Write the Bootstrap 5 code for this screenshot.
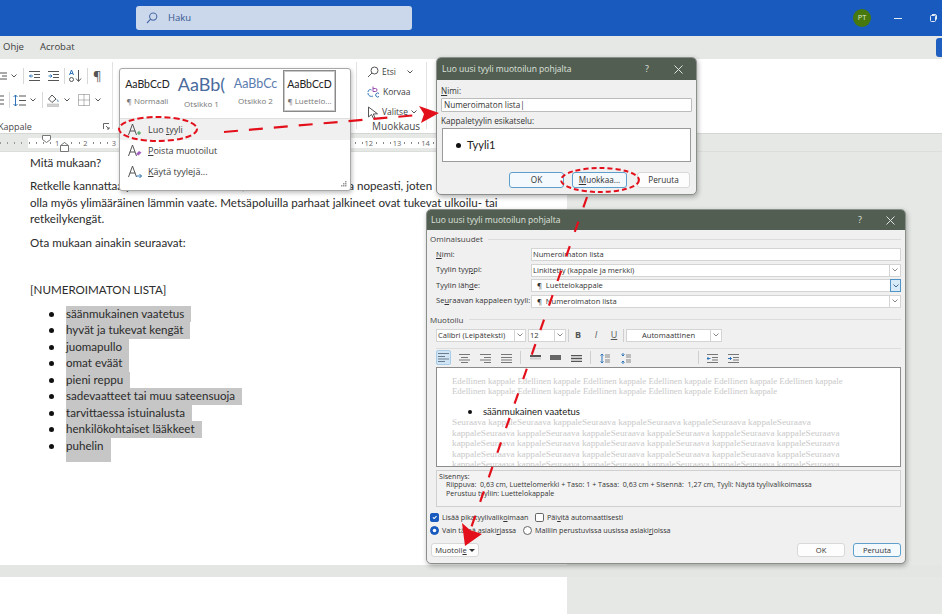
<!DOCTYPE html>
<html lang="fi">

<head>
    <meta charset="UTF-8">
    <meta name="viewport" content="width=device-width, initial-scale=1.0">
    <title>Luo uusi tyyli</title>
    <link href="https://cdn.jsdelivr.net/npm/bootstrap@5.3.0/dist/css/bootstrap.min.css" rel="stylesheet">
    <style>
        html, body { height: 100%; overflow: hidden; }
        body { background: #e6e8e6; font-family: "Open Sans", sans-serif; font-size: 9px; color: #333; }

        .app { width: 942px; height: 614px; overflow: hidden; }
        .gl-2 { margin-left: 2px; }
        .gl-3 { margin-left: 3px; }
        .gl-5 { margin-left: 5px; }
        .gl-6 { margin-left: 6px; }
        .no-shrink { flex: none; }

        /* title bar */
        .titlebar { height: 36px; background: #185abd; padding-left: 136px; padding-right: 5px; }
        .searchbox { width: 276px; height: 24px; background: #cbd8ec; border-radius: 3px; color: #34558f; font-size: 9.5px; padding-left: 10px; gap: 10px; }
        .avatar { width: 18px; height: 18px; border-radius: 50%; background: #47780e; color: #dfe8cf; font-size: 7.5px; margin-right: 23px; }
        .win-min { width: 8px; height: 1px; background: #e3ebf6; margin-right: 28px; }

        /* tabs */
        .tabstrip { height: 23px; background: #e6e8e6; font-size: 9.5px; color: #3c3c3c; padding-left: 3px; gap: 16px; }
        .sharebtn { width: 6px; height: 19px; background: #1f5fbf; border-radius: 3px 0 0 3px; }

        /* ribbon */
        .ribbon { height: 75px; background: #fff; border-bottom: 1px solid #d5d7d5; }
        .rib-left { width: 113px; border-right: 1px solid #e2e2e2; margin: 3px 0 4px; padding-top: 2px; }
        .rib-row { height: 24px; flex: none; }
        .rib-sep { width: 1px; height: 16px; background: #d8d8d8; flex: none; }
        .rib-pil { font-size: 13px; line-height: 1; color: #555; }
        .rib-name { font-size: 9px; color: #4a4a4a; line-height: 11px; }
        .rib-left .rib-name { margin-top: 9px; }
        .kap-name { margin-left: -2px; }
        .launcher { margin-right: 2px; }
        .rib-gallery { width: 243px; }
        .rib-edit { width: 71px; border-left: 1px solid #e2e2e2; border-right: 1px solid #e2e2e2; margin: 3px 0 4px; padding-left: 10px; font-size: 8.5px; color: #3c3c3c; }
        .edit-item { height: 20px; flex: none; gap: 3px; white-space: nowrap; }
        .edit-name { margin-top: -1px; margin-left: 5px; font-size: 10px; }

        /* ruler */
        .rulerbar { height: 18px; padding-top: 4px; background-color: #e6e8e6; border-bottom: 1px solid #dcdedc; padding-left: 28px; background-image: repeating-linear-gradient(90deg, #999 0 1px, transparent 1px 7.08px); background-size: 28px 2px; background-position: 0 8px; background-repeat: no-repeat; }
        .rulerwhite { width: 540px; height: 10px; background-color: #fff; padding-left: 15px; font-size: 7.5px; color: #666; line-height: 10px; background-image: repeating-linear-gradient(90deg, #888 0 1px, transparent 1px 7.08px); background-size: 100% 2px; background-position: 1px 4px; background-repeat: no-repeat; }
        .rulercell { width: 28.33px; flex: none; text-align: center; }
        .rulercell span { background: #fff; padding: 0 1px; }
        .rulermarks { left: 40px; top: 135px; z-index: 1; }

        /* document */
        .docarea { height: 413px; }
        .docpage { width: 567px; background: #fff; font-family: Lato, sans-serif; font-size: 11.6px; line-height: 16.4px; color: #2b2b2b; padding: 3px 0 0 30px; }
        .docpage p { margin: 0 0 7px; }
        .docpage .p-blank { margin-bottom: 0; }
        .docpage .p-head { margin-top: 8px; }
        .doclist { margin: 0; padding: 0; list-style: none; line-height: 16.5px; }
        .doclist li { position: relative; margin-left: 36px; }
        .doclist li::before { content: ""; position: absolute; left: -17.5px; top: 6px; width: 5px; height: 5px; border-radius: 50%; background: #111; }
        .sel { display: inline-block; background: #c6c6c6; padding-right: 7px; height: 16.5px; vertical-align: top; }
        .sel-last { height: 24px; }
        .docgap { height: 12px; background: #e4e6e4; }
        .docpage2 { width: 567px; height: 37px; background: #fff; }

        /* style gallery menu */
        .stylemenu { left: 119px; top: 68px; width: 232px; height: 123px; background: #fff; border: 1px solid #a8a8a8; border-radius: 3px; box-shadow: 1px 2px 4px rgba(0,0,0,.25); z-index: 5; }
        .gal-row { height: 50px; padding: 1px 0 0 3px; gap: 5px; border-bottom: 1px solid #dfdfdf; }
        .gal-cell { width: 49px; height: 42px; overflow: hidden; text-align: center; white-space: nowrap; flex: none; font-family: Lato, sans-serif; font-size: 10.5px; color: #222; line-height: 14px; padding-top: 7px; }
        .gal-cell small { display: block; font-family: "Open Sans", sans-serif; font-size: 8px; color: #777; margin-top: 4px; line-height: 12px; }
        .gal-big { font-size: 18px; color: #4a6a9c; line-height: 14px; }
        .gal-mid { font-size: 12.5px; color: #5a7cb0; }
        .gal-on { border: 1px solid #8a8a8a; outline: 1px solid #c8c8c8; outline-offset: -2px; width: 53px; padding-top: 6px; margin-left: -2px; }
        .menu-item { height: 21px; gap: 6px; padding-left: 8px; font-size: 9px; color: #3c3c3c; }
        .menu-on { background: #f0f0f0; }
        .menu-grip { right: 3px; bottom: 3px; }

        /* dialogs */
        .dlg { background: #f0f0f0; border: 1px solid #8a8f8a; border-radius: 5px; box-shadow: 1px 2px 5px rgba(0,0,0,.3); overflow: hidden; z-index: 6; font-size: 8.2px; color: #333; }
        .dlg-head { height: 22px; background: #535e52; color: #dfe3df; padding: 0 13px 0 5px; font-size: 8.5px; }
        .dlg-q { margin-right: 25px; font-size: 9px; }
        .dlg-one { left: 436px; top: 57px; width: 261px; height: 138px; }
        .dlg-two { left: 426px; top: 209px; width: 480px; height: 355px; font-size: 7.6px; }
        .dlg-two .dlg-head { height: 20px; padding: 0 10px 0 4px; }
        .dlg-two .dlg-q { margin-right: 24px; }

        .field { height: 14px; padding: 0 2px; border: 1px solid #bcbcbc; border-radius: 1px; background: #fff; color: #333; line-height: 12px; }
        .dlg-lab1 { margin-top: 5px; margin-bottom: 2px; line-height: 11px; }
        .dlg-lab2 { margin-top: 2.5px; line-height: 11px; }
        .dlg-btn { height: 16px; padding: 0; font-size: 8.2px; line-height: 14px; color: #333; background: #fdfdfd; border: 1px solid #d8d8d8; border-radius: 3px; }
        .dlg-btn:hover { color: #333; background: #fdfdfd; border-color: #d8d8d8; }
        .dlg-btn-on, .dlg-btn-on:hover { background: #f3f9fd; border-color: #5f9fcb; }
        .btn-w55 { width: 55px; }
        .btn-w53 { width: 53px; margin-left: 2px; }
        .one-preview { height: 34px; margin: 2.5px 1px 0; background: #fff; border: 1px solid #9a9a9a; gap: 6px; padding-left: 13px; }
        .one-dot { width: 5px; height: 5px; border-radius: 50%; background: #111; }
        .one-style { font-family: Lato, sans-serif; font-size: 11px; color: #222; }
        .one-btns { margin-top: 10px; margin-left: 68px; gap: 8px; }

        .two-body { padding: 3px 4px 0 3px; }
        .legendrow { gap: 5px; line-height: 12px; color: #444; font-size: 8px; }
        .legendrow i { flex: 1; height: 1px; background: #dcdcdc; }
        .prop-legend { margin-bottom: 3px; }
        .fmt-legend { margin-top: 6px; margin-bottom: 3px; }
        .prop-row { height: 13px; margin-bottom: 2.5px; }
        .prop-label { width: 101px; padding-left: 6px; flex: none; white-space: nowrap; }
        .combo { height: 13px; background: #fff; border: 1px solid #d4d4d4; flex: 1; padding-left: 1px; line-height: 11px; position: relative; white-space: nowrap; }
        .combo-arrow { position: absolute; right: 0; top: 0; bottom: 0; width: 11px; border-left: 1px solid #d4d4d4; display: flex; align-items: center; justify-content: center; }
        .combo-on { background: #d8eaf7; border: 1px solid #4f94c4; right: -1px; top: -1px; bottom: -1px; }
        .fmt-row { height: 13px; padding-left: 6px; }
        .font-combo { flex: none; width: 90px; }
        .size-combo { flex: none; width: 38px; margin-left: 2px; }
        .color-combo { flex: none; width: 96px; padding-right: 12px; }
        .tool-glyph { width: 18px; text-align: center; flex: none; font-size: 9px; color: #555; }
        .tool-div { width: 1px; height: 13px; background: #cfcfcf; flex: none; }
        .tool-on { width: 15px; height: 15px; background: #cfe4f5; border: 1px solid #a9cde8; border-radius: 2px; flex: none; }
        .tools-rule { height: 1px; background: #dcdcdc; margin: 6px 0 0 6px; }
        .align-row { height: 18px; padding-left: 6px; }
        .indent-div { margin-left: 63px; }

        .sample { height: 100px; margin-left: 6px; background: #fff; border: 1px solid #8c8c8c; font-family: "Liberation Serif", serif; font-size: 8.8px; line-height: 10.5px; color: #c9c9c9; overflow: hidden; padding: 8px 0 0 15px; white-space: nowrap; }
        .sample-list { position: relative; margin: 9.5px 0 -1px 31px; font-family: Lato, sans-serif; font-size: 9.5px; line-height: 12px; color: #222; }
        .sample-list::before { content: ""; position: absolute; left: -15px; top: 4px; width: 4px; height: 4px; border-radius: 50%; background: #111; }
        .sample-next { font-size: 9.25px; }
        .descbox { height: 37px; margin: 3px 0 0 6px; background: #f3f3f3; border: 1px solid #d0d0d0; padding: 1px 2px; font-size: 7.1px; line-height: 8.7px; color: #333; }
        .descbox div + div { padding-left: 7px; }

        .opt-line { height: 12.5px; font-size: 7.2px; }
        .opts-first { margin-top: 5px; }
        .opt { gap: 3px; white-space: nowrap; }
        .opt-w1 { width: 105px; }
        .opt-w2 { width: 93px; }
        .opt .form-check-input { width: 9px; height: 9px; margin: 0; flex: none; float: none; border-color: #666; }
        .opt .form-check-input:checked { background-color: #185abd; border-color: #185abd; }
        .two-btns { margin-top: 6px; gap: 8px; }
        .two-btns .btn { height: 14px; line-height: 12px; font-size: 7.6px; }
        .muotoile-btn { width: 48px; margin-left: 1px; }
        .ok-two { width: 48px; }
        .caret-mini { display: inline-block; width: 0; height: 0; border: 3px solid transparent; border-top-color: #333; border-bottom: 0; vertical-align: middle; }

        .marks { left: 0; top: 0; z-index: 9; pointer-events: none; }
    </style>
</head>

<body>
    <div class="app position-relative">

        <!-- title bar -->
        <div class="titlebar d-flex align-items-center">
            <div class="searchbox d-flex align-items-center">
                <svg width="12" height="12" viewBox="0 0 12 12" fill="none" stroke="#4a6aa5" stroke-width="1.1"><circle cx="7.2" cy="4.6" r="3.6"/><path d="M4.6 7.2 1 11"/></svg>
                <span>Haku</span>
            </div>
            <div class="ms-auto d-flex align-items-center">
                <div class="avatar d-flex align-items-center justify-content-center">PT</div>
                <div class="win-min"></div>
                <svg width="7" height="8" viewBox="0 0 7 8" fill="none" stroke="#e3ebf6"><rect x=".5" y="1.500" width="5" height="6" rx="1"/><path d="M2 .5h3a1.500 1.500 0 0 1 1.500 1.500v3.500"/></svg>
            </div>
        </div>

        <!-- tabs -->
        <div class="tabstrip d-flex align-items-center">
            <span>Ohje</span>
            <span>Acrobat</span>
            <div class="sharebtn ms-auto"></div>
        </div>

        <!-- ribbon -->
        <div class="ribbon d-flex">
            <div class="rib-left d-flex flex-column">
                <div class="rib-row d-flex align-items-center">
                    <svg class="no-shrink" width="7" height="10" viewBox="0 0 7 10" stroke="#555"><path d="M0 2h7M2 5h5M0 8h7"/></svg>
                    <svg class="ms-1" width="6" height="4" viewBox="0 0 6 4" fill="none" stroke="#555"><path d="M.5.5 3 3 5.500.5"/></svg>
                    <div class="rib-sep gl-6"></div>
                    <svg class="gl-5" width="11" height="10" viewBox="0 0 11 10" fill="none"><path d="M0 .5h11M5 3.500h6M5 6.500h6M0 9.500h11" stroke="#555"/><path d="M4 5H.5M2 3.500.5 5 2 6.500" stroke="#2d72b8"/></svg>
                    <svg class="ms-2" width="11" height="10" viewBox="0 0 11 10" fill="none"><path d="M0 .5h11M5 3.500h6M5 6.500h6M0 9.500h11" stroke="#555"/><path d="M.5 5H4M2.500 3.500 4 5 2.500 6.500" stroke="#2d72b8"/></svg>
                    <div class="rib-sep gl-5"></div>
                    <svg class="ms-1" width="13" height="14" viewBox="0 0 13 14" fill="none"><path d="M.5 6 2.500 1l2 5M1.200 4.500h2.600" stroke="#2d72b8"/><rect x=".5" y="8.500" width="4" height="4" rx="2" stroke="#555"/><path d="M9.500 1v11M7 9.500l2.500 3 2.500-3" stroke="#555"/></svg>
                    <div class="rib-sep gl-5"></div>
                    <span class="gl-5 rib-pil">¶</span>
                </div>
                <div class="rib-row d-flex align-items-center">
                    <svg class="no-shrink" width="4" height="10" viewBox="0 0 4 10" stroke="#555"><path d="M0 1h4M0 5h4M0 9h4"/></svg>
                    <div class="rib-sep gl-5"></div>
                    <svg class="gl-3" width="13" height="13" viewBox="0 0 13 13" fill="none"><path d="M6 2h7M6 6.500h7M6 11h7" stroke="#555"/><path d="M2.500 1v11M.5 3l2-2 2 2M.5 10l2 2 2-2" stroke="#2d72b8"/></svg>
                    <svg class="ms-1" width="6" height="4" viewBox="0 0 6 4" fill="none" stroke="#555"><path d="M.5.5 3 3 5.500.5"/></svg>
                    <div class="rib-sep gl-6"></div>
                    <svg class="ms-1" width="12" height="14" viewBox="0 0 12 14" fill="none"><path d="M5 2 1.500 6l3.500 3.500L9 6z" stroke="#555"/><path d="M10 6.500c.8 1 1.200 1.700 1 2.300" stroke="#2d72b8"/><rect x="0" y="11" width="12" height="2.500" fill="#d4d4d4" stroke="#aaa" stroke-width=".5"/></svg>
                    <svg class="gl-5" width="6" height="4" viewBox="0 0 6 4" fill="none" stroke="#555"><path d="M.5.5 3 3 5.500.5"/></svg>
                    <svg class="ms-2" width="12" height="12" viewBox="0 0 12 12" fill="none" stroke="#777" stroke-dasharray="1 1"><path d="M.5.5h11v11H.5zM6 .5v11M.5 6h11"/></svg>
                    <svg class="gl-5" width="6" height="4" viewBox="0 0 6 4" fill="none" stroke="#555"><path d="M.5.5 3 3 5.500.5"/></svg>
                </div>
                <div class="rib-name d-flex align-items-center">
                    <span class="kap-name">Kappale</span>
                    <svg class="ms-auto launcher" width="7" height="7" viewBox="0 0 7 7" fill="none" stroke="#666"><path d="M.5 6V.5H6M3 3l3 3M6 4v2H4"/></svg>
                </div>
            </div>
            <div class="rib-gallery"></div>
            <div class="rib-edit d-flex flex-column">
                <div class="edit-item d-flex align-items-center">
                    <svg width="12" height="12" viewBox="0 0 12 12" fill="none" stroke="#555"><circle cx="7.500" cy="4.500" r="3.500"/><path d="M5 7 1 11"/></svg>
                    <span>Etsi</span>
                    <svg class="ms-2" width="6" height="4" viewBox="0 0 6 4" fill="none" stroke="#555"><path d="M.5.5 3 3 5.500.5"/></svg>
                </div>
                <div class="edit-item d-flex align-items-center">
                    <svg width="13" height="12" viewBox="0 0 13 12" fill="none"><path d="M6 .5v5h2.500a1.500 1.500 0 0 0 0-3H6" stroke="#9a4fb0"/><path d="M1 6c0-2 2-3 3.500-2" stroke="#2d72b8"/><path d="M1 7c0 3 3 4 5 3M12 7.500a2 2 0 1 0 0 3" stroke="#2d72b8"/></svg>
                    <span>Korvaa</span>
                </div>
                <div class="edit-item d-flex align-items-center">
                    <svg width="12" height="13" viewBox="0 0 12 13" fill="none" stroke="#555"><path d="M1.500 1v10l3-2.500L6.500 12.500 8 11.800 6.300 8l4.200-.2z"/></svg>
                    <span>Valitse</span>
                    <svg width="6" height="4" viewBox="0 0 6 4" fill="none" stroke="#555"><path d="M.5.5 3 3 5.500.5"/></svg>
                </div>
                <div class="rib-name edit-name">Muokkaus</div>
            </div>
        </div>

        <!-- ruler -->
        <div class="rulerbar">
            <div class="rulerwhite d-flex">
                <div class="rulercell"><span>1</span></div><div class="rulercell"><span>2</span></div><div class="rulercell"><span>3</span></div><div class="rulercell"><span>4</span></div><div class="rulercell"><span>5</span></div><div class="rulercell"><span>6</span></div><div class="rulercell"><span>7</span></div><div class="rulercell"><span>8</span></div><div class="rulercell"><span>9</span></div><div class="rulercell"><span>10</span></div><div class="rulercell"><span>11</span></div><div class="rulercell"><span>12</span></div><div class="rulercell"><span>13</span></div><div class="rulercell"><span>14</span></div>
            </div>
        </div>
        <svg class="rulermarks position-absolute" width="30" height="18" viewBox="0 0 30 18" fill="#fff" stroke="#777"><path d="M2.500.5h8v4l-4 3-4-3z"/><path d="M24.500 7.500l-4 3v6h8v-6z"/><path d="M20.500 10.500h8"/></svg>

        <!-- document -->
        <div class="docarea d-flex">
            <div class="docpage">
                <p>Mitä mukaan?</p>
                <p>Retkelle kannattaa pukeutua sään mukaan, koska sää voi vaihtua nopeasti, joten<br>olla myös ylimääräinen lämmin vaate. Metsäpoluilla parhaat jalkineet ovat tukevat ulkoilu- tai<br>retkeilykengät.</p>
                <p>Ota mukaan ainakin seuraavat:</p>
                <p class="p-blank">&nbsp;</p>
                <p class="p-head">[NUMEROIMATON LISTA]</p>
                <ul class="doclist">
                    <li><span class="sel">säänmukainen vaatetus</span></li>
                    <li><span class="sel">hyvät ja tukevat kengät</span></li>
                    <li><span class="sel">juomapullo</span></li>
                    <li><span class="sel">omat eväät</span></li>
                    <li><span class="sel">pieni reppu</span></li>
                    <li><span class="sel">sadevaatteet tai muu sateensuoja</span></li>
                    <li><span class="sel">tarvittaessa istuinalusta</span></li>
                    <li><span class="sel">henkilökohtaiset lääkkeet</span></li>
                    <li><span class="sel sel-last">puhelin</span></li>
                </ul>
            </div>
        </div>
        <div class="docgap"></div>
        <div class="docpage2"></div>

        <!-- style gallery -->
        <div class="stylemenu position-absolute">
            <div class="gal-row d-flex">
                <div class="gal-cell">AaBbCcD<small>¶ Normaali</small></div>
                <div class="gal-cell"><span class="gal-big">AaBb(</span><small>Otsikko 1</small></div>
                <div class="gal-cell"><span class="gal-mid">AaBbCc</span><small>Otsikko 2</small></div>
                <div class="gal-cell gal-on">AaBbCcD<small>¶ Luettelo...</small></div>
            </div>
            <div class="menu-item menu-on d-flex align-items-center">
                <svg width="14" height="13" viewBox="0 0 14 13" fill="none"><path d="M.5 12 4.500 1l4 11M1.800 8h5.400" stroke="#555"/><path d="M11 8v4M9 10h4" stroke="#3a9a50"/></svg>
                <span>Luo <u>t</u>yyli</span>
            </div>
            <div class="menu-item d-flex align-items-center">
                <svg width="14" height="13" viewBox="0 0 14 13" fill="none"><path d="M.5 12 4.500 1l4 11M1.800 8h5.400" stroke="#555"/><path d="m8 10 3-3 2.500 1.500-3 3z" fill="#a45fc0"/></svg>
                <span><u>P</u>oista muotoilut</span>
            </div>
            <div class="menu-item d-flex align-items-center">
                <svg width="14" height="13" viewBox="0 0 14 13" fill="none"><path d="M.5 12 4.500 1l4 11M1.800 8h5.400" stroke="#555"/><path d="M8.500 11h5M11.500 9l2 2-2 2" stroke="#2d72b8"/></svg>
                <span><u>K</u>äytä tyylejä...</span>
            </div>
            <svg class="menu-grip position-absolute" width="6" height="6" viewBox="0 0 6 6" fill="#999"><path d="M4 0h1.500v1.500H4zM2 2h1.500v1.500H2zM4 2h1.500v1.500H4zM0 4h1.500v1.500H0zM2 4h1.500v1.500H2zM4 4h1.500v1.500H4z"/></svg>
        </div>

        <!-- first dialog -->
        <div class="dlg dlg-one position-absolute">
            <div class="dlg-head d-flex align-items-center">
                <span class="me-auto">Luo uusi tyyli muotoilun pohjalta</span>
                <span class="dlg-q">?</span>
                <svg width="9" height="9" viewBox="0 0 9 9" stroke="#dfe3df"><path d="m.5.500 8 8M8.500.5l-8 8"/></svg>
            </div>
            <div class="px-1">
                <div class="dlg-lab1"><u>N</u>imi:</div>
                <div class="field">Numeroimaton lista|</div>
                <div class="dlg-lab2">Kappaletyylin esikatselu:</div>
                <div class="one-preview d-flex align-items-center">
                    <span class="one-dot"></span><span class="one-style">Tyyli1</span>
                </div>
                <div class="d-flex one-btns">
                    <button type="button" class="btn dlg-btn dlg-btn-on btn-w55">OK</button>
                    <button type="button" class="btn dlg-btn dlg-btn-on btn-w55"><u>M</u>uokkaa...</button>
                    <button type="button" class="btn dlg-btn btn-w53">Peruuta</button>
                </div>
            </div>
        </div>

        <!-- second dialog -->
        <div class="dlg dlg-two position-absolute">
            <div class="dlg-head d-flex align-items-center">
                <span class="me-auto">Luo uusi tyyli muotoilun pohjalta</span>
                <span class="dlg-q">?</span>
                <svg width="9" height="9" viewBox="0 0 9 9" stroke="#dfe3df"><path d="m.5.500 8 8M8.500.5l-8 8"/></svg>
            </div>
            <div class="two-body">
                <div class="legendrow d-flex align-items-center prop-legend"><span>Ominaisuudet</span><i></i></div>
                <div class="prop-row d-flex align-items-center">
                    <span class="prop-label"><u>N</u>imi:</span>
                    <div class="combo">Numeroimaton lista</div>
                </div>
                <div class="prop-row d-flex align-items-center">
                    <span class="prop-label">Tyylin tyy<u>p</u>pi:</span>
                    <div class="combo">Linkitetty (kappale ja merkki)
                        <span class="combo-arrow"><svg width="6" height="4" viewBox="0 0 6 4" fill="none" stroke="#888"><path d="M.5.5 3 3 5.500.5"/></svg></span>
                    </div>
                </div>
                <div class="prop-row d-flex align-items-center">
                    <span class="prop-label">Tyylin läh<u>d</u>e:</span>
                    <div class="combo">&nbsp;&nbsp;¶&nbsp; Luettelokappale
                        <span class="combo-arrow combo-on"><svg width="6" height="4" viewBox="0 0 6 4" fill="none" stroke="#3f6f99"><path d="M.5.5 3 3 5.500.5"/></svg></span>
                    </div>
                </div>
                <div class="prop-row d-flex align-items-center">
                    <span class="prop-label">Se<u>u</u>raavan kappaleen tyyli:</span>
                    <div class="combo">&nbsp;&nbsp;¶&nbsp; Numeroimaton lista
                        <span class="combo-arrow"><svg width="6" height="4" viewBox="0 0 6 4" fill="none" stroke="#888"><path d="M.5.5 3 3 5.500.5"/></svg></span>
                    </div>
                </div>

                <div class="legendrow d-flex align-items-center fmt-legend"><span>Muotoilu</span><i></i></div>

                <div class="d-flex align-items-center fmt-row">
                    <div class="combo font-combo">Calibri (Leipäteksti)
                        <span class="combo-arrow"><svg width="6" height="4" viewBox="0 0 6 4" fill="none" stroke="#888"><path d="M.5.5 3 3 5.500.5"/></svg></span>
                    </div>
                    <div class="combo size-combo">12
                        <span class="combo-arrow"><svg width="6" height="4" viewBox="0 0 6 4" fill="none" stroke="#888"><path d="M.5.5 3 3 5.500.5"/></svg></span>
                    </div>
                    <div class="tool-div gl-2"></div>
                    <span class="tool-glyph fw-bold">B</span>
                    <span class="tool-glyph fst-italic">I</span>
                    <span class="tool-glyph text-decoration-underline">U</span>
                    <div class="tool-div"></div>
                    <div class="combo color-combo text-center gl-2">Automaattinen
                        <span class="combo-arrow"><svg width="6" height="4" viewBox="0 0 6 4" fill="none" stroke="#888"><path d="M.5.5 3 3 5.500.5"/></svg></span>
                    </div>
                </div>

                <div class="tools-rule"></div>

                <div class="d-flex align-items-center align-row">
                    <div class="tool-on d-flex align-items-center justify-content-center"><svg width="11" height="9" viewBox="0 0 11 9" stroke="#6a7c8c"><path d="M0 .5h11M0 3.500h7M0 6h11M0 8.500h7"/></svg></div>
                    <span class="tool-glyph ms-1"><svg width="11" height="9" viewBox="0 0 11 9" stroke="#777"><path d="M0 .5h11M2 3.500h7M0 6h11M2 8.500h7"/></svg></span>
                    <span class="tool-glyph gl-3"><svg width="11" height="9" viewBox="0 0 11 9" stroke="#777"><path d="M0 .5h11M4 3.500h7M0 6h11M4 8.500h7"/></svg></span>
                    <span class="tool-glyph gl-3"><svg width="11" height="9" viewBox="0 0 11 9" stroke="#777"><path d="M0 .5h11M0 3.500h11M0 6h11M0 8.500h11"/></svg></span>
                    <div class="tool-div gl-5"></div>
                    <span class="tool-glyph gl-5"><svg width="11" height="7" viewBox="0 0 11 7"><path d="M0 0h11v2H0z" fill="#555"/><path d="M0 3.500h11" stroke="#ccc" stroke-width="2"/></svg></span>
                    <span class="tool-glyph gl-2"><svg width="11" height="7" viewBox="0 0 11 7"><path d="M0 0h11v5H0z" fill="#666"/></svg></span>
                    <span class="tool-glyph gl-3"><svg width="11" height="7" viewBox="0 0 11 7" stroke="#555" stroke-width="1.300"><path d="M0 .7h11M0 3.500h11M0 6.300h11"/></svg></span>
                    <div class="tool-div gl-5"></div>
                    <span class="tool-glyph gl-5"><svg width="11" height="11" viewBox="0 0 11 11" fill="none"><path d="M2 1v9M.5 2.500 2 1l1.500 1.500M.5 8.500 2 10l1.500-1.500" stroke="#2d72b8"/><path d="M5 2h5M5 4h5M5 7h5M5 9h5" stroke="#888"/></svg></span>
                    <span class="tool-glyph gl-3"><svg width="11" height="11" viewBox="0 0 11 11" fill="none"><path d="M2 3V0M.5 1.500 2 3l1.500-1.500M2 8v3M.5 9.500 2 8l1.500 1.500" stroke="#2d72b8"/><path d="M5 2h5M5 4h5M5 7h5M5 9h5" stroke="#888"/></svg></span>
                    <div class="tool-div indent-div"></div>
                    <span class="tool-glyph ms-1"><svg width="11" height="9" viewBox="0 0 11 9" fill="none"><path d="M0 .5h11M5 3.500h6M5 6h6M0 8.500h11" stroke="#777"/><path d="M3.500 4.500H0M1.500 3 0 4.500 1.500 6" stroke="#2d72b8"/></svg></span>
                    <span class="tool-glyph gl-3"><svg width="11" height="9" viewBox="0 0 11 9" fill="none"><path d="M0 .5h11M5 3.500h6M5 6h6M0 8.500h11" stroke="#777"/><path d="M0 4.500h3.500M2 3l1.500 1.500L2 6" stroke="#2d72b8"/></svg></span>
                </div>

                <div class="sample">
                    <div>Edellinen kappale Edellinen kappale Edellinen kappale Edellinen kappale Edellinen kappale Edellinen kappale</div>
                    <div>Edellinen kappale Edellinen kappale Edellinen kappale Edellinen kappale Edellinen kappale</div>
                    <div class="sample-list">säänmukainen vaatetus</div>
                    <div class="sample-next">Seuraava kappaleSeuraava kappaleSeuraava kappaleSeuraava kappaleSeuraava kappaleSeuraava</div>
                    <div class="sample-next">kappaleSeuraava kappaleSeuraava kappaleSeuraava kappaleSeuraava kappaleSeuraava kappaleSeuraava</div>
                    <div class="sample-next">kappaleSeuraava kappaleSeuraava kappaleSeuraava kappaleSeuraava kappaleSeuraava kappaleSeuraava</div>
                    <div class="sample-next">kappaleSeuraava kappaleSeuraava kappaleSeuraava kappaleSeuraava kappaleSeuraava kappaleSeuraava</div>
                    <div class="sample-next">kappaleSeuraava kappaleSeuraava kappaleSeuraava kappaleSeuraava kappaleSeuraava kappaleSeuraava</div>
                </div>

                <div class="descbox">
                    <div>Sisennys:</div>
                    <div>Riippuva:&nbsp; 0,63 cm, Luettelomerkki + Taso: 1 + Tasaa:&nbsp; 0,63 cm + Sisennä:&nbsp; 1,27 cm, Tyyli: Näytä tyylivalikoimassa</div>
                    <div>Perustuu tyyliin: Luettelokappale</div>
                </div>

                <div class="d-flex align-items-center opts-first opt-line">
                    <label class="opt opt-w1 d-flex align-items-center"><input class="form-check-input" type="checkbox" checked><span>Lisää pikatyylivalik<u>o</u>imaan</span></label>
                    <label class="opt d-flex align-items-center"><input class="form-check-input" type="checkbox"><span>Päi<u>v</u>itä automaattisesti</span></label>
                </div>
                <div class="d-flex align-items-center opt-line">
                    <label class="opt opt-w2 d-flex align-items-center"><input class="form-check-input" type="radio" name="scope" checked><span>Vain tässä asiaki<u>r</u>jassa</span></label>
                    <label class="opt d-flex align-items-center"><input class="form-check-input" type="radio" name="scope"><span>Malliin perustuvissa uusissa asiaki<u>r</u>joissa</span></label>
                </div>

                <div class="d-flex align-items-center two-btns">
                    <button type="button" class="btn dlg-btn muotoile-btn">Muotoil<u>e</u> <span class="caret-mini"></span></button>
                    <button type="button" class="btn dlg-btn ok-two ms-auto">OK</button>
                    <button type="button" class="btn dlg-btn dlg-btn-on ok-two">Peruuta</button>
                </div>
            </div>
        </div>

        <!-- red annotations -->
        <svg class="marks position-absolute" width="942" height="614" viewBox="0 0 942 614" fill="none" stroke="#e3101c">
            <ellipse cx="158" cy="129" rx="39" ry="12" stroke-width="2" stroke-dasharray="6 3"/>
            <path d="M224 132 418 115" stroke-width="2.200" stroke-dasharray="14 11"/>
            <path d="m439 113-20-7 5 8-3 9z" fill="#e3101c" stroke="none"/>
            <ellipse cx="600" cy="180" rx="39" ry="12" stroke-width="2" stroke-dasharray="5 3"/>
            <path d="M587 197 471 528" stroke-width="2.200" stroke-dasharray="11 15"/>
            <path d="m465 546-3-23 8 7 12 4z" fill="#e3101c" stroke="none"/>
        </svg>
    </div>
</body>

</html>
